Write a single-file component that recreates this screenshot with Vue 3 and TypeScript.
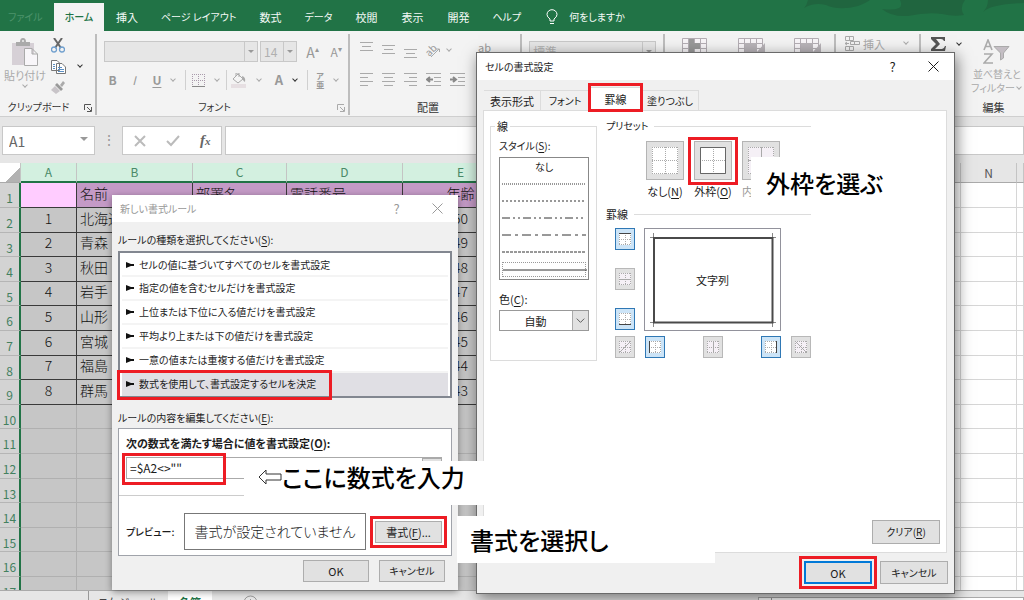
<script setup lang="ts">
const menus = ['挿入', 'ページ レイアウト', '数式', 'データ', '校閲', '表示', '開発', 'ヘルプ']
const isKana = (s: string) => /^[ァ-ー ]+$/.test(s)
const people = ['北海道', '青森', '秋田', '岩手', '山形', '宮城', '福島', '群馬'].map((name, i) => ({
  no: i + 1,
  name,
  age: 50 - i,
}))
const emptyRows = [10, 11, 12, 13, 14, 15, 16, 17]
const rules = [
  'セルの値に基づいてすべてのセルを書式設定',
  '指定の値を含むセルだけを書式設定',
  '上位または下位に入る値だけを書式設定',
  '平均より上または下の値だけを書式設定',
  '一意の値または重複する値だけを書式設定',
  '数式を使用して、書式設定するセルを決定',
]
const lineStyles = ['1 1', '2 2', '8 3 2 3 2 3', '9 4 3 4', '3 1', '']
interface Edge { name: string; on: boolean; d: string }
const sideEdges: Edge[] = [
  { name: '上罫線', on: true, d: 'M4 5.5H16' },
  { name: '横罫線', on: false, d: 'M4 11.5H16' },
  { name: '下罫線', on: true, d: 'M4 16.5H16' },
]
const bottomEdges: Edge[] = [
  { name: '右上がり斜線', on: false, d: 'M4 17L16 5' },
  { name: '左罫線', on: true, d: 'M4.5 5V17' },
  { name: '縦罫線', on: false, d: 'M10.5 5V17' },
  { name: '右罫線', on: true, d: 'M15.5 5V17' },
  { name: '右下がり斜線', on: false, d: 'M4 5L16 17' },
]
const presets = [
  { label: 'なし', key: 'N', d: '' },
  { label: '外枠', key: 'O', d: 'M6.5 6.5H31.5V32.5H6.5Z' },
  { label: '内', key: '', d: 'M19.5 6V33M6 19.5H32' },
]
const alignTop = ['M0 1.5H13M2 5.5H11M0 9.5H13', 'M0 4.5H13M2 8.5H11M0 12.5H13', 'M0 8.5H13M2 12.5H11M0 16.5H13']
const alignBottom = ['M0 3.5H13M0 7.5H8M0 11.5H13M0 15.5H8', 'M0 3.5H13M2 7.5H11M0 11.5H13M2 15.5H11', 'M0 3.5H13M5 7.5H13M0 11.5H13M5 15.5H13']
</script>

<template>
  <div class="app">
    <nav class="menubar">
      <svg class="waves" width="240" height="20" viewBox="0 0 240 20"><path d="M24 0Q23 5 20 8Q30 2 42 5Q55 11 74 6Q82 3 86 0ZM98 9Q107 17 124 16Q143 12 158 14Q170 17 180 15Q175 8 181 0H116Q122 12 98 9ZM199 12Q207 4 240 3V0H204Q204 7 199 12Z" /></svg>
      <button class="file kana">ファイル</button>
      <button class="home kana">ホーム</button>
      <button v-for="m in menus" :key="m" :class="{ kana: isKana(m) }">{{ m }}</button>
      <button class="tell kana">
        <svg width="12" height="17" viewBox="0 0 12 17"><path d="M4 12V10Q1 8 1 5.500A5 4.800 0 0 1 11 5.500Q11 8 8 10V12ZM4 14.500H8" /></svg>
        何をしますか
      </button>
    </nav>

    <section class="ribbon">
      <div class="group clip">
        <div class="tools">
          <button class="paste">
            <svg width="28" height="29" viewBox="0 0 28 29"><path fill="#d6d0d6" d="M1 5H23V27H1Z" /><path fill="#aaa" d="M5 4H9Q9 0 12 0T15 4H19V8H5Z" /><circle cx="12" cy="3" r="1" fill="#eee" /><path fill="#f8f6f9" stroke="#aaa" d="M13.500 10.500H21L26.500 16V27.500H13.500ZM21 10.500V16H26.500" /></svg>
            <span>貼り付け</span>
            <i class="chev"></i>
          </button>
          <div class="clip-small">
            <button aria-label="切り取り"><svg width="14" height="15" viewBox="0 0 14 15"><path d="M3 0L10 10M11 0L4 10" stroke="#666" stroke-width="2" /><circle cx="3" cy="11.500" r="2.500" fill="none" stroke="#6f9fce" stroke-width="1.300" /><circle cx="11" cy="11.500" r="2.500" fill="none" stroke="#6f9fce" stroke-width="1.300" /></svg></button>
            <button class="copy" aria-label="コピー"><svg width="15" height="14" viewBox="0 0 15 14"><path fill="#fff" stroke="#777" d="M.5 .5H6L8.500 3V10.500H.5ZM5.500 3.500H11L14.500 7V13.500H5.500Z" /><path stroke="#5b8fc4" d="M2 4.500H4M2 6.500H4M2 8.500H4M7 7.500H11M7 9.500H13M7 11.500H13" /></svg><i class="chev dark"></i></button>
            <button aria-label="書式のコピー"><svg width="14" height="14" viewBox="0 0 14 14"><path fill="#aaa" d="M9 4L12 0L14 2L11 6Z" /><path fill="#999" d="M4 4L6 2L12 8L10 10Z" /><path fill="#c8c4c8" d="M4 5L9 10L5 13L0 9Z" /></svg></button>
          </div>
        </div>
        <footer class="kana">クリップボード<svg class="launch dark" width="8" height="8" viewBox="0 0 8 8"><path d="M.5 6V.5H7M3 3L7 7M7.500 3V7.500H3" /></svg></footer>
      </div>

      <div class="group font">
        <div class="tools stack">
          <div class="line">
            <span class="combo family"><input aria-label="フォント名" /><i class="tri"></i></span>
            <span class="combo size"><input aria-label="フォント サイズ" value="14" /><i class="tri"></i></span>
            <button class="grow">A<sup>▴</sup></button>
            <button class="grow small">A<sup>▾</sup></button>
          </div>
          <div class="line styles">
            <button><b>B</b></button><button><em>I</em></button><button class="wide"><u>U</u><i class="chev"></i></button>
            <button class="wide ruled"><svg width="13" height="13" viewBox="0 0 13 13"><path stroke="#a99aab" stroke-dasharray="1 1" d="M0 .5H13M.5 0V13M12.500 0V13M6.500 0V13M0 6.500H13" /><path stroke="#888" d="M0 12.500H13" /></svg><i class="chev"></i></button>
            <button class="wide ruled"><svg width="16" height="15" viewBox="0 0 16 15"><path fill="#e6dfe2" d="M0 11H15V15H0Z" /><path fill="#f5f5f5" stroke="#aaa" d="M2 6L7 1L12 6L7 10ZM5 3V0H8V4" /><path fill="#aaa" d="M11 3Q15 4 14 9Q11 7 11 3Z" /></svg><i class="chev"></i></button>
            <button class="wide"><b class="color-a">A</b><i class="chev dark"></i></button>
            <button class="wide ruled"><span class="ruby"><small>ア</small>亜</span><i class="chev"></i></button>
          </div>
        </div>
        <footer class="kana">フォント<svg class="launch" width="8" height="8" viewBox="0 0 8 8"><path d="M.5 6V.5H7M3 3L7 7M7.500 3V7.500H3" /></svg></footer>
      </div>

      <div class="group align">
        <div class="tools stack">
          <div class="line icons">
            <svg v-for="d in alignTop" :key="d" width="13" height="18" viewBox="0 0 13 18"><path :d="d" /></svg>
            <button class="wide"><svg class="tilt" width="15" height="15" viewBox="0 0 15 15"><text x="-1" y="10" transform="rotate(-45 6 7)" class="ab">ab</text><path d="M5 14L13 6M10 6H13.500V9" /></svg><i class="chev"></i></button>
            <span class="wrap">ab</span>
          </div>
          <div class="line icons">
            <svg v-for="d in alignBottom" :key="d" width="13" height="18" viewBox="0 0 13 18"><path :d="d" /></svg>
            <svg width="15" height="18" viewBox="0 0 15 18"><path d="M0 3.500H15M8 7.500H15M8 11.500H15M0 15.500H15" /><path class="arrow" d="M1 9.500H7M4 7L1 9.500L4 12" /></svg>
            <svg width="15" height="18" viewBox="0 0 15 18"><path d="M0 3.500H15M8 7.500H15M8 11.500H15M0 15.500H15" /><path class="arrow" d="M0 9.500H6M3 7L6 9.500L3 12" /></svg>
          </div>
        </div>
        <footer>配置</footer>
      </div>

      <div class="group number"><div class="tools"><span class="combo format"><input aria-label="表示形式" value="標準" /><i class="tri"></i></span></div></div>

      <div class="group looks">
        <div class="tools">
          <svg v-for="n in 3" :key="n" width="28" height="22" viewBox="0 0 28 22"><path fill="#f8f5f8" stroke="#b4aeb4" d="M.5 .5H24.500V20.500H.5ZM.5 5.500H24.500M.5 10.500H24.500M.5 15.500H24.500M6.500 .5V20M12.500 .5V20M18.500 .5V20" /><path v-if="n === 1" fill="#999" d="M7 1H12V5H18V11H12V15H7Z" /><path v-else fill="#b8b3b8" d="M7 5H19V15H7ZM18 15L27 5V14Z" /></svg>
        </div>
      </div>

      <div class="group cells"><div class="tools"><svg width="15" height="15" viewBox="0 0 15 15"><path fill="none" stroke="#aaa" d="M.5 .5H8.500V4.500H.5ZM4.500 .5V4M.5 10.500H8.500V14.500H.5ZM4.500 10.500V14M5.500 5.500H14.500V8.500H5.500ZM9.500 5.500V8.500M4 7.500H0M2 6L0 7.500L2 9" /></svg><span>挿入</span><i class="chev"></i></div></div>

      <div class="group edit">
        <div class="tools">
          <button class="sum" aria-label="合計"><svg width="15" height="14" viewBox="0 0 15 14"><path fill="#555" d="M0 0H14V4H13Q12 2 10 2H5L9 7L4 12H11Q13 12 14 9H15L14 14H0V12L5 7L0 2Z" /></svg><i class="chev dark"></i></button>
          <button class="sort kana"><svg width="28" height="26" viewBox="0 0 28 26"><path fill="none" stroke="#aaa" stroke-width="1.600" d="M1 11L5 1L9 11M2.500 7.500H7.500M1 15H9L1 24H10" /><path fill="#c4bec4" stroke="#aaa" d="M11 7.500H26L20.500 14V19L17.500 21V14Z" /></svg><span>並べ替えと<br />フィルター<i class="chev"></i></span></button>
        </div>
        <footer>編集</footer>
      </div>
    </section>

    <section class="formula">
      <label class="namebox"><input aria-label="名前ボックス" value="A1" /><i class="tri"></i></label>
      <span class="grip">⋮</span>
      <div class="fx">
        <svg width="12" height="12" viewBox="0 0 12 12"><path d="M1 1L11 11M11 1L1 11" /></svg>
        <svg width="14" height="12" viewBox="0 0 14 12"><path d="M1 6L5 10L13 1" /></svg>
        <b>f<small>x</small></b>
      </div>
      <input class="entry" aria-label="数式バー" />
    </section>

    <main class="sheet">
      <table>
        <colgroup><col class="c-row" /><col class="c-a" /><col class="c-b" /><col class="c-c" /><col class="c-b" /><col class="c-b" /><col /><col class="c-n" /><col class="c-o" /></colgroup>
        <thead>
          <tr><th class="corner"></th><th v-for="c in ['A', 'B', 'C', 'D', 'E']" :key="c" class="sel">{{ c }}</th><th></th><th>N</th><th></th></tr>
        </thead>
        <tbody>
          <tr class="heads"><th>1</th><td class="active"></td><td>名前</td><td>部署名</td><td>電話番号</td><td class="mid">年齢</td><td></td><td></td><td></td></tr>
          <tr v-for="p in people" :key="p.no" class="data"><th>{{ p.no + 1 }}</th><td class="mid">{{ p.no }}</td><td>{{ p.name }}</td><td></td><td></td><td class="mid">{{ p.age }}</td><td></td><td></td><td></td></tr>
          <tr v-for="r in emptyRows" :key="r"><th>{{ r }}</th><td v-for="n in 8" :key="n"></td></tr>
        </tbody>
      </table>
    </main>

    <footer class="sheetbar">
      <button class="schedule">スケジュール</button><button class="current">名簿</button>
      <svg width="15" height="15" viewBox="0 0 15 15"><circle cx="7.500" cy="7.500" r="6.500" /><path d="M7.500 4V11M4 7.500H11" /></svg>
      <div class="scroll"><i></i></div>
    </footer>

    <div class="dialog rule" role="dialog" aria-label="新しい書式ルール">
      <header><span>新しい書式ルール</span><button>?</button><button aria-label="閉じる"><svg width="11" height="11" viewBox="0 0 11 11"><path d="M.5 .5L10.500 10.500M10.500 .5L.5 10.500" /></svg></button></header>
      <div class="rule-body">
        <p>ルールの種類を選択してください(<u>S</u>):</p>
        <ul class="rules">
          <li v-for="(r, i) in rules" :key="r" :class="{ chosen: i === 5 }"><button><svg width="8" height="6" viewBox="0 0 8 6"><path d="M0 0L5 2H8V4H5L0 6Z" /></svg>{{ r }}</button></li>
        </ul>
        <p>ルールの内容を編集してください(<u>E</u>):</p>
        <div class="detail">
          <label for="rule-formula">次の数式を満たす場合に値を書式設定(<u>O</u>):</label>
          <div class="formula-line"><span class="mark"><input id="rule-formula" value="=$A2&lt;&gt;&quot;&quot;" /></span><span class="rest"><button aria-label="参照"></button></span></div>
          <div class="preview-line"><b>プレビュー:</b><output>書式が設定されていません</output><span class="mark"><button class="btn">書式(<u>F</u>)...</button></span></div>
        </div>
        <div class="actions"><button class="btn">OK</button><button class="btn kana">キャンセル</button></div>
      </div>
    </div>

    <div class="dialog cellfmt" role="dialog" aria-label="セルの書式設定">
      <header><span>セルの書式設定</span><button>?</button><button aria-label="閉じる"><svg width="11" height="11" viewBox="0 0 11 11"><path d="M.5 .5L10.500 10.500M10.500 .5L.5 10.500" /></svg></button></header>
      <div class="tabs"><button>表示形式</button><button class="kana">フォント</button><button class="open mark">罫線</button><button class="kana">塗りつぶし</button></div>
      <div class="panel">
        <fieldset class="lines">
          <legend>線</legend>
          <p class="kana">スタイル(<u>S</u>):</p>
          <div class="stylelist">
            <span class="kana">なし</span>
            <div v-for="(s, i) in lineStyles" :key="s" :class="{ picked: i === 5 }"><svg width="84" height="2" viewBox="0 0 84 2"><path d="M0 1H84" :stroke-dasharray="s" /></svg></div>
          </div>
          <label for="line-color">色(<u>C</u>):</label>
          <div class="pick"><select id="line-color"><option>自動</option></select><svg width="16" height="18" viewBox="0 0 16 18"><path d="M4 7L8 11L12 7" /></svg></div>
        </fieldset>
        <div class="borders">
          <h4 class="kana">プリセット</h4>
          <div class="presets">
            <div v-for="p in presets" :key="p.label" :class="{ faded: !p.key }">
              <button :class="{ mark: p.key === 'O' }" :aria-label="p.label"><svg width="38" height="39" viewBox="0 0 38 39"><path class="face" d="M6 6H32V33H6Z" /><path class="dots" d="M6 6.500H32M6 32.500H32M6.500 6V33M31.500 6V33M19.500 6V33M6 19.500H32" /><path class="solid" :d="p.d" /></svg></button>
              <span>{{ p.label }}<template v-if="p.key">(<u>{{ p.key }}</u>)</template></span>
            </div>
          </div>
          <h4>罫線</h4>
          <div class="edge-grid">
            <div class="side"><button v-for="e in sideEdges" :key="e.name" class="edge" :class="{ on: e.on }" :aria-label="e.name"><svg width="20" height="22" viewBox="0 0 20 22"><path class="face" d="M4 5H16V17H4Z" /><path class="dots" d="M4 5.500H16M4 16.500H16M4.500 5V17M15.500 5V17M10.500 5V17M4 11.500H16" /><path class="solid" :d="e.d" /></svg></button></div>
            <div class="sample"><svg viewBox="0 0 135 101" preserveAspectRatio="none"><path class="tick" d="M5 8.500H13M8.500 4V12M122 8.500H131M127.500 4V12M5 93.500H13M8.500 89V98M122 93.500H131M127.500 89V98" /><path class="frame" d="M9 9H127.500V93.500H9Z" /></svg><span>文字列</span></div>
            <div class="below"><button v-for="e in bottomEdges" :key="e.name" class="edge" :class="{ on: e.on }" :aria-label="e.name"><svg width="20" height="22" viewBox="0 0 20 22"><path class="face" d="M4 5H16V17H4Z" /><path class="dots" d="M4 5.500H16M4 16.500H16M4.500 5V17M15.500 5V17M10.500 5V17M4 11.500H16" /><path class="solid" :d="e.d" /></svg></button></div>
          </div>
        </div>
        <button class="btn clear kana">クリア(<u>R</u>)</button>
      </div>
      <div class="actions"><span class="mark"><button class="btn primary">OK</button></span><button class="btn kana">キャンセル</button></div>
    </div>

    <div class="note formula-note"><svg width="24" height="18" viewBox="0 0 24 18"><path d="M1 9L8 2V6H23V12H8V16Z" /></svg>ここに数式を入力</div>
    <div class="note format-note">書式を選択し</div>
    <div class="note outline-note">外枠を選ぶ</div>
  </div>
</template>

<style>
html, body { margin: 0; overflow: hidden; }
</style>

<style scoped>
* { box-sizing: border-box; }
.app { position: relative; height: 100vh; overflow: hidden; display: flex; flex-direction: column; background: #e6e6e6; font: 11px/16px "Noto Sans CJK JP", sans-serif; font-feature-settings: "palt"; color: #333; }
button, input, select { font: inherit; font-feature-settings: inherit; color: inherit; border: 0; background: none; padding: 0; margin: 0; border-radius: 0; min-width: 0; }
button { white-space: nowrap; }
svg { display: block; flex: none; fill: none; }
p, h4, ul { margin: 0; padding: 0; list-style: none; font-weight: 400; }
u { text-underline-offset: 2px; }
.kana { font-size: 10px; }

.menubar { position: relative; display: flex; align-items: flex-end; flex: none; height: 31px; background: #217346; color: #f4faf6; }
.menubar button { position: relative; height: 28px; padding: 0 12px; }
.menubar .kana { padding: 0 11px; }
.menubar .file { width: 54px; padding: 0 14px 0 8px; text-align: left; color: #4d946c; }
.menubar .home { width: 50px; padding: 0; background: #f3f3f3; color: #217346; font-weight: 500; }
.menubar .tell { display: flex; align-items: center; gap: 11px; padding-left: 14px; }
.tell path { stroke: #fff; }
.waves { position: absolute; right: 0; top: 0; }
.waves path { fill: #20653f; }

.ribbon { display: flex; flex: none; height: 86px; background: #f3f3f3; border-bottom: 1px solid #cfcfcf; color: #aaa; }
.group { display: flex; flex-direction: column; flex: none; border-right: 2px solid #bdbdbd; margin: 3px 0 1px; }
.group .tools { flex: 1; display: flex; }
.group footer { position: relative; text-align: center; color: #333; height: 16px; }
.launch { position: absolute; right: 3px; top: 5px; }
.launch path { stroke: #aaa; }
.launch.dark path { stroke: #555; }
.chev { display: inline-block; flex: none; width: 4px; height: 4px; border: solid #aaa; border-width: 0 1px 1px 0; transform: rotate(45deg); margin: 0 2px 3px; }
.chev.dark { border-color: #333; }
.tri { flex: none; width: 0; height: 0; border: 3px solid transparent; border-top-color: #999; border-bottom: 0; }
.clip { width: 97px; }
.clip .tools { padding: 4px 0 0 5px; }
.clip footer { padding-right: 18px; }
.paste { display: flex; flex-direction: column; align-items: center; width: 40px; }
.clip-small { display: flex; flex-direction: column; gap: 6px; margin-left: 6px; }
.clip-small button { display: flex; align-items: center; height: 15px; }
.copy .chev { margin-left: 12px; }
.font { width: 253px; }
.stack { flex-direction: column; }
.line { display: flex; align-items: center; }
.font .tools { padding: 7px 0 0 7px; gap: 8px; }
.font footer { padding-right: 16px; }
.combo { display: flex; align-items: center; border: 1px solid #c8c8c8; background: #e6e6e6; height: 21px; }
.combo input { flex: 1; width: 0; height: 19px; padding: 0 3px; border-right: 1px solid #c8c8c8; color: #b0b0b0; font-size: 12px; }
.combo .tri { margin: 0 3px; }
.family { width: 156px; margin-right: 2px; }
.size { width: 37px; }
.grow { font-size: 14px; width: 24px; margin-left: 4px; color: #999; }
.grow.small { font-size: 12px; margin-left: 0; }
.grow sup { font-size: 8px; line-height: 8px; }
.styles { height: 20px; margin-left: -2px; color: #999; }
.styles button { width: 22px; height: 20px; font-size: 12px; }
.styles .wide { display: flex; width: 42px; align-items: center; justify-content: center; gap: 8px; }
.styles .wide u, .styles b { font-weight: 700; }
.ruled { border-left: 1px solid #d0d0d0; }
.styles .color-a { font-size: 13px; }
.ruby { font-size: 8px; line-height: 9px; font-weight: 700; }
.ruby small { display: block; font-size: 8px; }
.align { width: 172px; }
.align .tools { padding: 6px 0 0 10px; gap: 9px; }
.align footer { padding-right: 14px; }
.icons { gap: 9px; height: 20px; }
.icons path { stroke: #aaa; }
.icons .arrow { stroke: #888; stroke-width: 2; }
.icons .wide { display: flex; align-items: center; gap: 4px; }
.tilt { overflow: visible; }
.ab { font-size: 10px; fill: #999; }
.wrap { margin-left: 16px; margin-bottom: 6px; color: #999; }
.number { width: 143px; }
.number .tools { padding: 7px 7px; }
.format { width: 127px; }
.looks { width: 171px; }
.looks .tools { padding: 4px 0 0 17px; gap: 28px; }
.cells { width: 85px; }
.cells .tools { padding: 2px 0 0 9px; gap: 3px; }
.cells .chev { margin: 4px 0 0 16px; }
.edit { flex: 1; border: 0; }
.edit .tools { padding: 3px 0 0 10px; }
.sum { display: flex; align-items: center; gap: 9px; height: 14px; }
.sort { display: flex; flex-direction: column; align-items: center; margin-left: 8px; line-height: 14px; }
.sort svg { margin: 2px 0 2px; }
.edit footer { padding-left: 42px; }

.formula { display: flex; flex: none; height: 46px; padding: 9px 0 8px 2px; }
.formula > * { height: 29px; }
.namebox { display: flex; align-items: center; width: 93px; background: #fff; border: 1px solid #c8c8c8; padding: 2px 6px; }
.namebox input { flex: 1; width: 0; font-size: 14px; color: #666; }
.namebox .tri { border-width: 4px 4px 0; margin-bottom: 4px; }
.grip { width: 27px; text-align: center; line-height: 26px; color: #999; font-size: 14px; }
.fx { display: flex; align-items: center; gap: 20px; width: 100px; padding: 0 11px; background: #fff; border: 1px solid #c8c8c8; }
.fx path { stroke: #bbb; stroke-width: 2; }
.fx b { font: italic 700 15px "Liberation Serif", serif; color: #666; }
.fx small { font-size: 11px; }
.entry { flex: 1; margin-left: 3px; background: #fff; border: 1px solid #c8c8c8; }

.sheet { flex: 1; min-height: 0; overflow: hidden; background: #fff; }
table { width: 100%; table-layout: fixed; border-collapse: separate; border-spacing: 0; }
.c-row { width: 21px; } .c-a { width: 56px; } .c-b { width: 116px; } .c-c { width: 94px; } .c-n { width: 56px; } .c-o { width: 7px; }
th, td { padding: 0; overflow: hidden; white-space: nowrap; font-weight: 400; }
thead th { height: 20px; line-height: 16px; font-size: 12px; background: #e6e6e6; border-right: 1px solid #c4c4c4; border-bottom: 1px solid #aaa; color: #555; }
thead .sel { background: #d3f0e0; color: #4a8a68; border-bottom: 2px solid #217346; }
thead .corner { background: linear-gradient(135deg, transparent 62%, #b2b2b2 62%); border-right: 1px solid #c4c4c4; }
tbody tr { height: 25px; }
tbody tr:nth-child(5n), tbody tr:nth-child(5n + 3) { height: 24px; }
tbody th { font-size: 12px; line-height: 16px; padding-top: 6px; color: #43805f; background: #d3d3d3; border-right: 2px solid #217346; border-bottom: 1px solid #b5b5b5; }
tbody td { height: 24px; font-size: 14px; line-height: 18px; font-weight: 300; padding: 0 0 5px 3px; background: #c6c6c6; border-right: 1px solid #b0b0b0; border-bottom: 1px solid #b0b0b0; color: #111; font-feature-settings: normal; }
tbody td:nth-child(n + 7) { background: #fff; border-color: #d6d6d6; }
tbody .mid { text-align: center; padding-left: 0; }
.heads td:nth-child(-n + 6), .data td:nth-child(-n + 6) { border-color: #3a3a3a; }
.heads td:nth-child(-n + 6) { background: #c49ac6; }
.heads .active.active { background: #ffccff; }

.sheetbar { display: flex; flex: none; height: 10px; overflow: hidden; border-top: 1px solid #aaa; align-items: flex-start; }
.sheetbar button { padding-top: 1px; height: 20px; color: #444; }
.sheetbar .schedule { width: 80px; margin-left: 88px; border-left: 1px solid #999; }
.sheetbar .current { width: 44px; background: #fff; color: #217346; font-weight: 700; }
.sheetbar svg { margin: 4px 0 0 31px; }
.sheetbar svg * { stroke: #999; }
.scroll { margin: 6px 0 0 auto; width: 266px; height: 14px; border: 1px solid #aaa; background: #fff; }
.scroll i { display: block; height: 14px; width: 13px; border-right: 1px solid #999; }

.dialog { position: absolute; display: flex; flex-direction: column; background: #f0f0f0; color: #1c1c1c; }
.dialog header { display: flex; align-items: center; flex: none; background: #fff; font-size: 10px; }
.dialog header span { flex: 1; }
.dialog header button { display: grid; place-items: center; width: 41px; height: 26px; font-size: 13px; }
.dialog header path { stroke: currentColor; }
.btn { height: 22px; background: #e1e1e1; border: 1px solid #adadad; text-align: center; }
.mark { position: relative; }
.mark::after { content: ""; position: absolute; inset: -5px; border: 3px solid #ed1c24; pointer-events: none; }

.rule { left: 112px; top: 195px; width: 346px; height: 395px; box-shadow: 0 2px 7px rgba(0, 0, 0, .4); }
.rule header { height: 27px; padding-left: 8px; color: #999; }
.rule-body { padding: 10px 6px 0; }
.rule-body p { font-size: 10px; }
.rules { margin: 3px 0 12px; border: 2px solid #828790; background: #fff; padding: 1px 2px 0; height: 147px; font-size: 10px; }
.rules li { position: relative; height: 24px; border-bottom: 2px solid #f4f4f4; }
.rules li:first-child { height: 23px; }
.rules button { display: flex; align-items: center; gap: 5px; width: 100%; height: 22px; padding-left: 4px; text-align: left; }
.rules svg path { fill: #111; }
.rules .chosen { border: 0; background: #e0dfe4; height: 23px; }
.chosen::after { content: ""; position: absolute; left: -5px; top: -3px; bottom: -4px; width: 209px; border: 3px solid #ed1c24; }
.detail { margin-top: 2px; height: 128px; border: 1px solid #a0a3aa; background: #fff; padding: 6px 0 0; }
.detail > label { display: block; padding-left: 7px; font-weight: 700; }
.formula-line { display: flex; margin: 6px 9px 16px 7px; height: 22px; }
.formula-line .mark { width: 97px; }
.formula-line .mark::after { inset: -4px -3px -6px -4px; }
.formula-line input { width: 97px; height: 22px; border: 1px solid #aaa; border-right: 0; padding: 0 0 2px 3px; display: block; font-size: 12px; font-feature-settings: normal; }
.rest { flex: 1; border: solid #aaa; border-width: 1px 0; text-align: right; }
.rest button { width: 20px; height: 20px; background: #e1e1e1; border: 1px solid #aaa; }
.preview-line { display: flex; align-items: center; border-top: 1px solid #ccc; padding: 17px 9px 0 7px; }
.preview-line b { width: 58px; font-weight: 500; font-size: 10px; }
.preview-line output { flex: 1; height: 37px; border: 1px solid #777; text-align: center; font-size: 14px; line-height: 34px; font-weight: 300; white-space: nowrap; }
.preview-line .mark { margin-left: 9px; height: 22px; }
.preview-line .btn { width: 67px; }
.actions { display: flex; justify-content: flex-end; gap: 10px; }
.rule .actions { padding: 4px 7px 0; }
.rule .actions .btn { width: 66px; }

.cellfmt { left: 476px; top: 52px; width: 479px; height: 542px; border: 1px solid #6a6a6a; box-shadow: 2px 4px 14px rgba(0, 0, 0, .5); }
.cellfmt header { height: 27px; padding-left: 8px; }
.tabs { display: flex; height: 20px; margin: 10px 0 0 7px; }
.tabs button { width: 57px; border: 1px solid #dcdcdc; border-bottom: 0; border-left: 0; }
.tabs button:nth-child(2) { width: 49px; }
.tabs .open { width: 52px; height: 23px; margin-top: -3px; background: #fff; z-index: 1; }
.tabs .open::after { inset: -5px -2px -2px -2px; }
.panel { display: flex; align-items: flex-start; position: relative; margin: 0 7px 0 6px; height: 443px; border: 1px solid #dcdcdc; background: #fff; padding: 7px 6px; }
.lines { margin: 0; width: 107px; height: 243px; border: 1px solid #dcdcdc; padding: 4px 7px 0 8px; min-width: 0; }
.lines legend { padding: 0 2px; margin-left: -4px; line-height: 16px; }
.stylelist { display: flex; flex-direction: column; height: 123px; margin: 3px 0 11px; border: 1px solid #888; padding: 1px 2px 0; text-align: center; }
.stylelist div { height: 17px; display: flex; align-items: center; flex: none; }
.stylelist path { stroke: #333; }
.stylelist .picked { height: 15px; margin-top: 2px; border: 1px dotted #999; }
.pick { position: relative; margin-top: 3px; }
.pick select { display: block; appearance: none; width: 90px; height: 21px; border: 1px solid #999; text-align: center; padding-right: 17px; background: #fff; }
.pick svg { position: absolute; right: 1px; top: 1px; height: 19px; background: #e1e1e1; border-left: 1px solid #aaa; }
.pick path { stroke: #555; }
.borders { margin-left: 9px; width: 205px; }
.borders h4 { display: flex; align-items: center; gap: 6px; }
.borders h4::after { content: ""; flex: 1; height: 1px; background: #dcdcdc; }
.presets { display: flex; gap: 10px; padding: 7px 0 0 40px; }
.presets > div { display: flex; flex-direction: column; align-items: center; width: 38px; white-space: nowrap; }
.presets > .faded { align-items: flex-start; color: #999; }
.presets button { width: 38px; height: 39px; background: #e1e1e1; outline: 1px solid #b4b4b4; outline-offset: -1px; }
.presets .mark::after { inset: -4px -6px -5px; }
.presets span { margin-top: 3px; }
.presets .face { fill: #fff; }
.presets .faded .face { fill: #f5f0f6; }
.presets .faded .solid { stroke: #aaa; }
.presets + h4 { margin-top: 7px; }
.dots { stroke: #aaa; stroke-dasharray: 1 1; }
.solid { stroke: #666; }
.edge-grid { display: grid; grid-template-columns: 20px 137px; column-gap: 9px; row-gap: 5px; padding: 6px 0 0 9px; }
.side { display: flex; flex-direction: column; justify-content: space-between; height: 102px; }
.edge { flex: none; width: 20px; height: 22px; background: #e1e1e1; outline: 1px solid #b8b8b8; outline-offset: -1px; }
.edge .face { fill: #f5f0f6; }
.edge .solid { stroke: #aaa; }
.edge.on { background: #cce4f7; outline-color: #2f78b5; }
.edge.on .face { fill: #fff; }
.edge.on .solid { stroke: #444; }
.sample { position: relative; display: grid; place-items: center; height: 103px; border: 1px solid #92929c; }
.sample svg { position: absolute; inset: 0; width: 100%; height: 100%; }
.tick { stroke: #888; }
.frame { stroke: #4a4a4a; stroke-width: 2; }
.below { grid-column: 1 / 3; display: flex; gap: 10px; }
.below .edge:nth-child(3), .below .edge:nth-child(4) { margin-left: 28px; }
.clear { position: absolute; right: 6px; bottom: 8px; width: 68px; height: 24px; }
.cellfmt .actions { padding: 8px 6px 0; gap: 8px; }
.cellfmt .actions .btn { width: 68px; height: 23px; }
.cellfmt .mark .primary { border: 2px solid #0078d7; display: block; }

.note { position: absolute; display: flex; align-items: center; background: #fff; color: #000; font-size: 24px; line-height: 36px; font-weight: 500; white-space: nowrap; }
.note path { stroke: #333; }
.formula-note { left: 244px; top: 461px; width: 246px; height: 44px; padding: 0 0 12px 14px; }
.format-note { left: 457px; top: 516px; width: 258px; height: 47px; padding-left: 13px; }
.outline-note { left: 751px; top: 157px; width: 150px; height: 51px; padding-left: 15px; }
</style>
